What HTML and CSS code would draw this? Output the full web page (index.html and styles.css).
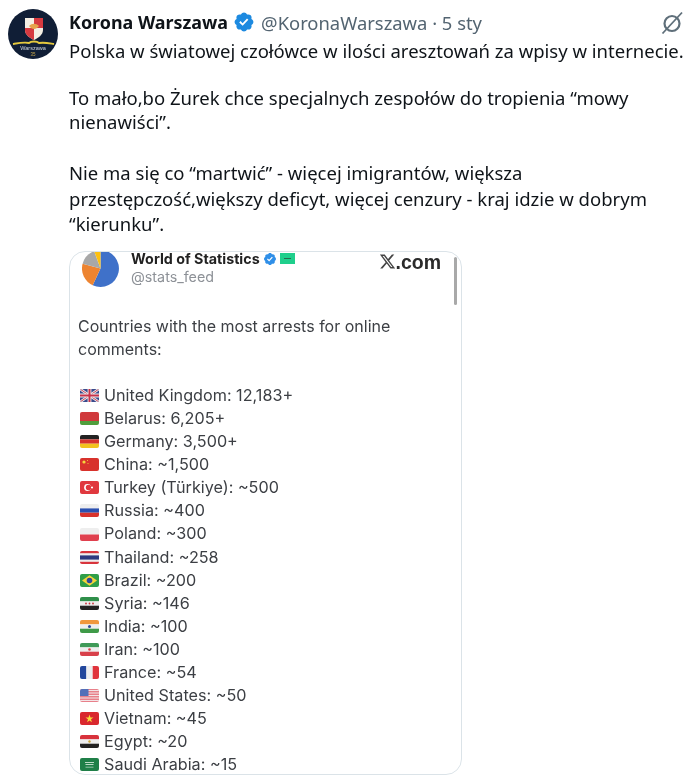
FILE: index.html
```html
<!DOCTYPE html>
<html lang="pl">
<head>
<meta charset="utf-8">
<title>Korona Warszawa</title>
<link rel="stylesheet" href="styles.css">
</head>
<body>
<svg class="defs" width="0" height="0" aria-hidden="true">
  <defs>
    <symbol id="verified" viewBox="0 0 24 24"><path d="M22.25 12c0-1.43-.88-2.67-2.19-3.34.46-1.39.2-2.9-.81-3.91s-2.52-1.27-3.91-.81c-.66-1.31-1.91-2.19-3.34-2.19s-2.67.88-3.33 2.19c-1.4-.46-2.91-.2-3.92.81s-1.26 2.52-.8 3.91c-1.31.67-2.2 1.91-2.2 3.34s.89 2.67 2.2 3.34c-.46 1.39-.21 2.9.8 3.91s2.52 1.26 3.91.81c.67 1.31 1.91 2.19 3.34 2.19s2.68-.88 3.34-2.19c1.39.45 2.9.2 3.91-.81s1.27-2.52.81-3.91c1.31-.67 2.19-1.91 2.19-3.34zm-11.71 4.2L6.8 12.46l1.41-1.42 2.26 2.26 4.8-5.23 1.47 1.36-6.2 6.77z"/></symbol>
    <symbol id="f-uk" viewBox="0 0 19 13"><rect width="19" height="13" fill="#3a4a8c"/><path d="M0 0l19 13M19 0L0 13" stroke="#eee" stroke-width="2.6"/><path d="M0 0l19 13M19 0L0 13" stroke="#c8324a" stroke-width=".9"/><path d="M9.5 0v13M0 6.500h19" stroke="#eee" stroke-width="3.8"/><path d="M9.5 0v13M0 6.500h19" stroke="#c8324a" stroke-width="2"/></symbol>
    <symbol id="f-by" viewBox="0 0 19 13"><rect width="19" height="9" fill="#d0393c"/><rect y="9" width="19" height="4" fill="#4f9e3c"/></symbol>
    <symbol id="f-de" viewBox="0 0 19 13"><rect width="19" height="4.400" fill="#222"/><rect y="4.400" width="19" height="4.300" fill="#d6322c"/><rect y="8.700" width="19" height="4.300" fill="#f2c21d"/></symbol>
    <symbol id="f-cn" viewBox="0 0 19 13"><rect width="19" height="13" fill="#d8322c"/><circle cx="4" cy="4" r="1.6" fill="#f5d63d"/><circle cx="7.5" cy="2.5" r=".5" fill="#f5d63d"/><circle cx="8" cy="5.5" r=".5" fill="#f5d63d"/></symbol>
    <symbol id="f-tr" viewBox="0 0 19 13"><rect width="19" height="13" fill="#e0383e"/><circle cx="7.5" cy="6.500" r="3.4" fill="#fff"/><circle cx="8.500" cy="6.500" r="2.700" fill="#e0383e"/><circle cx="12" cy="6.500" r="1.100" fill="#fff"/></symbol>
    <symbol id="f-ru" viewBox="0 0 19 13"><rect width="19" height="4.400" fill="#eee"/><rect y="4.400" width="19" height="4.300" fill="#2b50b0"/><rect y="8.700" width="19" height="4.300" fill="#d8322c"/></symbol>
    <symbol id="f-pl" viewBox="0 0 19 13"><rect width="19" height="6.500" fill="#eeeeee"/><rect y="6.500" width="19" height="6.500" fill="#e0404e"/></symbol>
    <symbol id="f-th" viewBox="0 0 19 13"><rect width="19" height="13" fill="#d8343c"/><rect y="2.200" width="19" height="8.600" fill="#eee"/><rect y="4.400" width="19" height="4.200" fill="#2d3a80"/></symbol>
    <symbol id="f-br" viewBox="0 0 19 13"><rect width="19" height="13" fill="#2f9e48"/><path d="M9.5 1.200L17 6.500 9.5 11.800 2 6.500z" fill="#f4d53a"/><circle cx="9.5" cy="6.500" r="2.800" fill="#2f4a96"/></symbol>
    <symbol id="f-sy" viewBox="0 0 19 13"><rect width="19" height="4.400" fill="#2f8f4a"/><rect y="4.400" width="19" height="4.300" fill="#eee"/><rect y="8.700" width="19" height="4.300" fill="#222"/><circle cx="6" cy="6.500" r=".9" fill="#c8323a"/><circle cx="9.5" cy="6.500" r=".9" fill="#c8323a"/><circle cx="13" cy="6.500" r=".9" fill="#c8323a"/></symbol>
    <symbol id="f-in" viewBox="0 0 19 13"><rect width="19" height="4.400" fill="#f0983c"/><rect y="4.400" width="19" height="4.300" fill="#eee"/><rect y="8.700" width="19" height="4.300" fill="#3f9a48"/><circle cx="9.5" cy="6.500" r="1.500" fill="#2f4a96"/></symbol>
    <symbol id="f-ir" viewBox="0 0 19 13"><rect width="19" height="4.400" fill="#3f9a58"/><rect y="4.400" width="19" height="4.300" fill="#eee"/><rect y="8.700" width="19" height="4.300" fill="#d8404a"/><circle cx="9.5" cy="6.500" r="1.300" fill="#d8404a"/></symbol>
    <symbol id="f-fr" viewBox="0 0 19 13"><rect width="6.400" height="13" fill="#23479c"/><rect x="6.400" width="6.300" height="13" fill="#eee"/><rect x="12.700" width="6.300" height="13" fill="#e0343c"/></symbol>
    <symbol id="f-us" viewBox="0 0 19 13"><rect width="19" height="13" fill="#e8808a"/><path d="M0 1.500h19M0 4h19M0 6.500h19M0 9h19M0 11.500h19" stroke="#f3e4e6" stroke-width="1"/><rect width="8.500" height="7" fill="#5470b8"/></symbol>
    <symbol id="f-vn" viewBox="0 0 19 13"><rect width="19" height="13" fill="#d9282e"/><path d="M9.500 2.500l1 3h3l-2.500 1.800.9 3-2.400-1.800-2.400 1.800.9-3L5.500 5.500h3z" fill="#f8dc3a"/></symbol>
    <symbol id="f-eg" viewBox="0 0 19 13"><rect width="19" height="4.400" fill="#d8323c"/><rect y="4.400" width="19" height="4.300" fill="#eee"/><rect y="8.700" width="19" height="4.300" fill="#222"/><circle cx="9.500" cy="6.500" r="1.200" fill="#c9a33a"/></symbol>
    <symbol id="f-sa" viewBox="0 0 19 13"><rect width="19" height="13" fill="#1f7f48"/><path d="M5 4.500h9M5.500 6.500h8" stroke="#cfe4d6" stroke-width=".9"/><path d="M5.500 9.200h8" stroke="#e3efe7" stroke-width=".6"/></symbol>
  </defs>
</svg>

<article class="tweet">
  <div class="avatar">
    <svg viewBox="0 0 50 50" width="50" height="50">
      <circle cx="25" cy="25" r="25" fill="#101e36"/>
      <path d="M17 9h18v12c0 5-5 8-9 10-4-2-9-5-9-10z" fill="#f4efe4"/>
      <path d="M26 9h9v10h-9zM17 19h9v12c-4-2-9-5-9-10z" fill="#d63a40"/>
      <path d="M21 17c3-3 7-3 10 0-3 4-7 4-10 0z" fill="#e6a44c"/>
      <path d="M5 35c6-1 11-2 16-1 2-2 8-2 10 0 5-1 9 0 15 1" fill="none" stroke="#e4c83e" stroke-width="1.900"/>
      <text x="25" y="41" class="avatar-name">Warszawa</text>
      <text x="25" y="47" class="avatar-num">35</text>
    </svg>
  </div>
  <div class="main">
    <header class="head">
      <span class="name">Korona Warszawa</span>
      <svg class="badge" width="22" height="22"><use href="#verified"/></svg>
      <span class="meta">@KoronaWarszawa · 5 sty</span>
      <svg class="grok" viewBox="0 0 24 24" width="24" height="24"><circle cx="12" cy="12.500" r="7.500" fill="none" stroke="#5f6f7a" stroke-width="2.200"/><path d="M2.500 22.500L22 1.500" stroke="#5f6f7a" stroke-width="1.800"/></svg>
    </header>
    <div class="text">
      <p>Polska w światowej czołówce w ilości aresztowań za wpisy w internecie.</p>
      <p>To mało,bo Żurek chce specjalnych zespołów do tropienia “mowy nienawiści”.</p>
      <p class="wide">Nie ma się co “martwić” - więcej imigrantów, większa przestępczość,większy deficyt, więcej cenzury - kraj idzie w dobrym “kierunku”.</p>
    </div>
    <section class="card">
      <div class="scrollbar"></div>
      <div class="shot">
        <div class="shot-head">
          <svg class="pie" viewBox="0 0 37 37" width="37" height="37">
            <path d="M18.500 18.500V0A18.500 18.500 0 1 1 10.700 35.300z" fill="#3f71c9"/>
            <path d="M18.500 18.500L10.700 35.300A18.500 18.500 0 0 1 .63 13.700z" fill="#ed8431"/>
            <path d="M18.500 18.500L.63 13.700A18.500 18.500 0 0 1 12.200 1.100z" fill="#a8a8a8"/>
            <path d="M18.500 18.500L12.200 1.100A18.500 18.500 0 0 1 18.500 0z" fill="#fdc010"/>
          </svg>
          <div class="who">
            <div class="who-name"><span>World of Statistics</span>
              <svg class="who-badge" width="14" height="14"><use href="#verified"/></svg>
              <span class="mark"></span>
            </div>
            <div class="who-handle">@stats_feed</div>
          </div>
          <div class="brand">
            <svg viewBox="0 0 24 24" width="17" height="17"><path d="M18.244 2.250h3.308l-7.227 8.260 8.502 11.240H16.170l-5.214-6.817L4.990 21.750H1.680l7.730-8.835L1.254 2.250H8.080l4.713 6.231zm-1.161 17.520h1.833L7.084 4.126H5.117z"/></svg><span>.com</span>
          </div>
        </div>
        <p class="shot-title">Countries with the most arrests for online comments:</p>
        <ul class="rows">
          <li><svg class="flag"><use href="#f-uk"/></svg>United Kingdom: 12,183+</li>
          <li><svg class="flag"><use href="#f-by"/></svg>Belarus: 6,205+</li>
          <li><svg class="flag"><use href="#f-de"/></svg>Germany: 3,500+</li>
          <li><svg class="flag"><use href="#f-cn"/></svg>China: ~1,500</li>
          <li><svg class="flag"><use href="#f-tr"/></svg>Turkey (Türkiye): ~500</li>
          <li><svg class="flag"><use href="#f-ru"/></svg>Russia: ~400</li>
          <li><svg class="flag"><use href="#f-pl"/></svg>Poland: ~300</li>
          <li><svg class="flag"><use href="#f-th"/></svg>Thailand: ~258</li>
          <li><svg class="flag"><use href="#f-br"/></svg>Brazil: ~200</li>
          <li><svg class="flag"><use href="#f-sy"/></svg>Syria: ~146</li>
          <li><svg class="flag"><use href="#f-in"/></svg>India: ~100</li>
          <li><svg class="flag"><use href="#f-ir"/></svg>Iran: ~100</li>
          <li><svg class="flag"><use href="#f-fr"/></svg>France: ~54</li>
          <li><svg class="flag"><use href="#f-us"/></svg>United States: ~50</li>
          <li><svg class="flag"><use href="#f-vn"/></svg>Vietnam: ~45</li>
          <li><svg class="flag"><use href="#f-eg"/></svg>Egypt: ~20</li>
          <li><svg class="flag"><use href="#f-sa"/></svg>Saudi Arabia: ~15</li>
        </ul>
      </div>
    </section>
  </div>
</article>
</body>
</html>
```
FILE: styles.css
```css
* { box-sizing: border-box; }
html, body { margin: 0; padding: 0; background: #fff; }
body { width: 691px; height: 781px; overflow: hidden; font-family: "Noto Sans", sans-serif; color: #0f1419; }
.defs { position: absolute; }
.tweet { display: flex; gap: 11px; padding: 9px 7px 0 8px; filter: blur(0.45px); }
.avatar { flex: none; width: 50px; height: 50px; }
.avatar svg { display: block; }
.avatar-name { font: 5.5px "Liberation Sans", sans-serif; fill: #cfd6e0; text-anchor: middle; }
.avatar-num { font: 4.5px "Liberation Sans", sans-serif; fill: #c9a84a; text-anchor: middle; }
.main { flex: 1; min-width: 0; }
.head { display: flex; align-items: center; height: 28px; margin-top: -1px; }
.name { font-weight: 700; font-size: 17.9px; }
.badge { margin-left: 5px; fill: #1d8ae0; flex: none; }
.meta { margin-left: 6px; font-size: 18.4px; color: #536471; }
.grok { margin-left: auto; flex: none; margin-top: 2px; }
.text { font-size: 18.5px; line-height: 23.5px; margin-top: 3px; }
.text p { margin: 0 0 27px; }
.text p:first-child { margin-bottom: 23.5px; }
.text .wide { margin-bottom: 0; line-height: 25.7px; }
.card { position: relative; width: 393px; height: 524px; margin-top: 14px; border: 1px solid #dbe3e8; border-radius: 16px; overflow: hidden; }
.scrollbar { position: absolute; top: 5px; right: 4px; width: 3px; height: 48px; background: #a9a9a9; border-radius: 2px; }
.shot { padding: 0 0 0 8px; font-family: Inter, sans-serif; color: #3c3f44; font-size: 16px; line-height: 23.05px; }
.shot-head { display: flex; align-items: flex-start; height: 38px; margin-top: -2px; }
.pie { flex: none; margin-left: 4px; }
.who { margin-left: 12px; }
.who-name { display: flex; align-items: center; gap: 3px; font-weight: 700; font-size: 14.3px; line-height: 17px; color: #222; }
.who-badge { fill: #2f8fe8; }
.mark { width: 15px; height: 11px; background: linear-gradient(#2a6a50, #2a6a50) center / 7px 1px no-repeat #1fcf8c; }
.who-handle { font-size: 14.3px; line-height: 19px; color: #8d9197; }
.brand { margin: 3px 20px 0 auto; display: flex; align-items: center; font-family: "Liberation Sans", sans-serif; font-weight: 700; font-size: 19.500px; line-height: 16px; color: #2b2b2b; }
.brand svg { fill: #444; margin-right: -1px; }
.shot-title { margin: 27px 25px 23px 0; }
.rows { list-style: none; margin: 0; padding: 0; font-size: 16.2px; }
.rows li { display: flex; align-items: center; height: 23.05px; white-space: nowrap; }
.flag { flex: none; width: 19px; height: 13px; margin: 0 5px 0 2px; border-radius: 2px; }
```
